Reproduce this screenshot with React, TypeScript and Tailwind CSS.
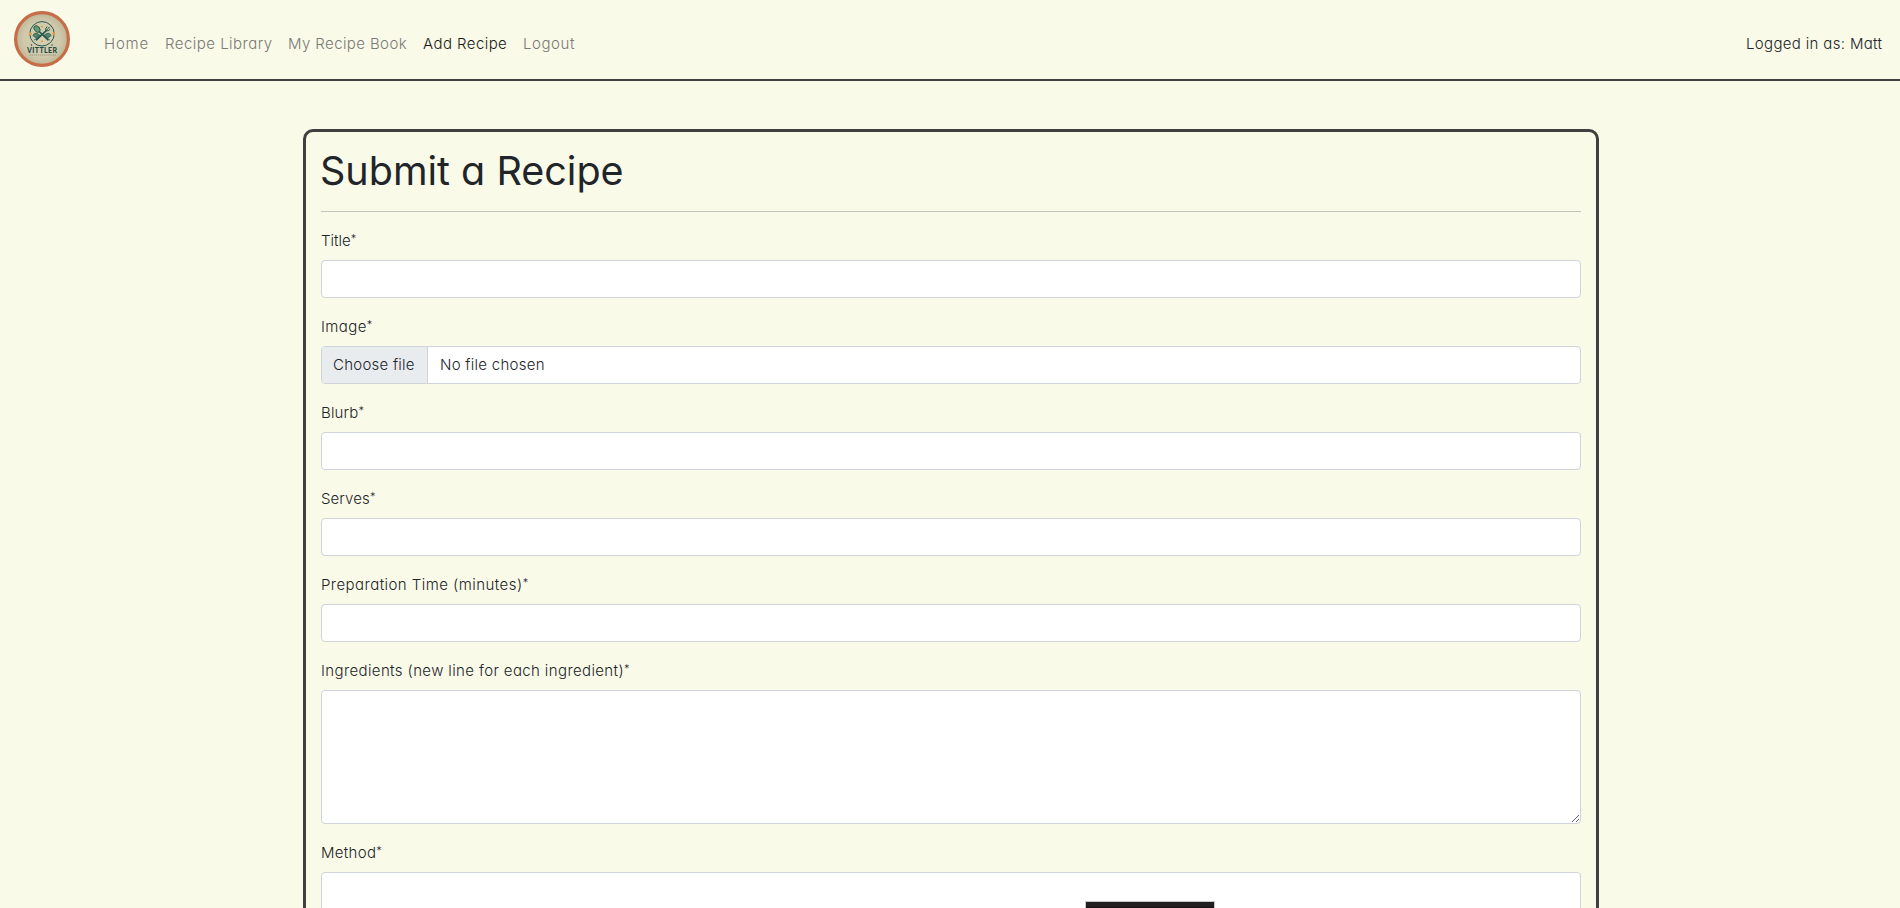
import React from "react";

const NAV_ITEMS = [
  { label: "Home", style: "w-[45px] tracking-[0.8px] text-[#797976]" },
  { label: "Recipe Library", style: "w-[107px] tracking-[0.47px] text-[#797976]" },
  { label: "My Recipe Book", style: "w-[119px] tracking-[0.4px] text-[#797976]" },
  { label: "Add Recipe", style: "w-[84px] tracking-[0.43px] text-[#191917]" },
  { label: "Logout", style: "w-[53px] tracking-[0.57px] text-[#797976]" },
];

function Logo() {
  return (
    <svg viewBox="0 0 56 56" className="size-14 shrink-0" aria-label="Vittler">
      <defs>
        <radialGradient id="plate">
          <stop offset="0" stopColor="#d6d0b2" />
          <stop offset="0.7" stopColor="#cfc8aa" />
          <stop offset="1" stopColor="#bcb596" />
        </radialGradient>
      </defs>
      <circle cx="28" cy="28" r="26.4" fill="url(#plate)" stroke="#c76d48" strokeWidth="3.2" />
      <g transform="translate(0 -0.7)">
        <circle cx="28" cy="23.5" r="12.2" fill="none" stroke="#25594e" strokeWidth="1" />
        <g stroke="#25594e" strokeLinecap="round">
          <path d="M24.5 20.5 34 29.5M32 20.5 22.5 29.5" strokeWidth="1.6" />
          <ellipse cx="23" cy="18.7" rx="2.6" ry="3.7" transform="rotate(-40 23 18.7)" fill="#659c72" strokeWidth="0.9" />
          <path d="M32 20.5q-1.4-1.8.8-4M32 20.5q2.4 1 4-1.3M32.5 20l2.8-3.2" strokeWidth="1" fill="none" />
          <path d="M26 25q-5-4.2-7 0 2.5 4.5 7 0Zm4 0q5-4.2 7 0-2.5 4.5-7 0Z" fill="#4d8a6d" strokeWidth="0.8" />
          <path d="m24.5 27-4 2.5m11-2.5 4 2.5" strokeWidth="0.9" />
        </g>
        <g fill="#e59a43">
          <circle cx="28" cy="16.5" r="1" />
          <circle cx="16.3" cy="23.5" r="1.5" />
          <circle cx="39.7" cy="23.5" r="1.5" />
          <circle cx="28" cy="31" r="1" />
        </g>
      </g>
      <path d="M17.5 33.2v1.6M38 33.2v1.6" stroke="#25594e" strokeWidth="1.2" />
      <text x="28" y="42.2" textAnchor="middle" textLength="30" lengthAdjust="spacing" className="fill-[#1d4a43] font-['Lato'] text-[7px] font-black">
        VITTLER
      </text>
      <path d="M15.5 44H42" stroke="#8a9581" strokeWidth="1.7" strokeDasharray="1.3 .8" opacity="0.6" />
    </svg>
  );
}

function Label({ text, style }: { text: string; style: string }) {
  return (
    <label className={"mb-2 block h-6 whitespace-nowrap leading-[25px] " + style}>
      {text}
      <span className="align-[3px] text-[11px] leading-none tracking-normal">*</span>
    </label>
  );
}

const CONTROL = "block w-full rounded border border-[#ced4da] bg-white outline-none";

function TextField({ text, style }: { text: string; style: string }) {
  return (
    <div className="mb-4">
      <Label text={text} style={style} />
      <input className={CONTROL + " h-[38px] px-3"} />
    </div>
  );
}

export default function App() {
  return (
    <div className="relative h-[908px] overflow-hidden bg-[#fafae8] font-['Inter',sans-serif] text-[15px] font-light text-[#212529] [font-feature-settings:'cv11']">
      <header className="flex h-[81px] items-start justify-between border-b-2 border-[#404040] pt-[11px] pr-[18px] pl-[14px]">
        <div className="flex">
          <Logo />
          <nav className="ml-[34px] flex gap-4 pt-[21px] leading-6 whitespace-nowrap">
            {NAV_ITEMS.map((item) => (
              <a key={item.label} className={item.style}>
                {item.label}
              </a>
            ))}
          </nav>
        </div>
        <span className="w-[136px] pt-[21px] leading-6 tracking-[0.34px] whitespace-nowrap">Logged in as: Matt</span>
      </header>

      <main className="mx-auto mt-12 w-[1296px] translate-x-px rounded-[10px] border-[3px] border-[#404040] p-[15px]">
        <h1 className="-ml-px h-12 text-[39.5px] leading-[49px] font-normal">Submit a Recipe</h1>
        <hr className="my-4 h-px border-0 bg-[#c3c4b9]" />
        <form>
          <TextField text="Title" style="" />
          <div className="mb-4">
            <Label text="Image" style="tracking-[0.4px]" />
            <div className={CONTROL + " flex h-[38px] overflow-hidden leading-9"}>
              <span className="w-[106px] border-r border-[#ced4da] bg-[#e9ecef] pl-[11px] tracking-[0.25px]">Choose file</span>
              <span className="pl-3 tracking-[0.28px]">No file chosen</span>
            </div>
          </div>
          <TextField text="Blurb" style="tracking-[0.15px]" />
          <TextField text="Serves" style="tracking-[0.1px]" />
          <TextField text="Preparation Time (minutes)" style="tracking-[0.45px]" />
          <div className="mb-4">
            <Label text="Ingredients (new line for each ingredient)" style="tracking-[0.38px]" />
            <textarea className={CONTROL + " h-[134px] resize"} />
          </div>
          <div>
            <Label text="Method" style="tracking-[0.3px]" />
            <textarea className={CONTROL + " h-[134px]"} />
          </div>
        </form>
      </main>

      <div className="absolute top-[901px] left-[1085px] h-10 w-[130px] border border-[#c8c8c8] bg-[#202020]">
        <div className="mt-[5px] h-8 bg-[#181114]" />
      </div>
    </div>
  );
}
